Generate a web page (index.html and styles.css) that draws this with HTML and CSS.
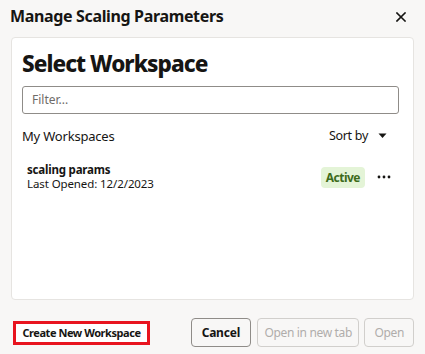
FILE: index.html
```html
<!DOCTYPE html>
<html>
<head>
<meta charset="utf-8">
<link rel="stylesheet" href="styles.css">
</head>
<body>
<div class="dialog">
  <div class="header">
    <div class="title">Manage Scaling Parameters</div>
    <div class="close">
      <svg width="10" height="10" viewBox="0 0 10 10"><path d="M1 1L9 9M9 1L1 9" stroke="#161513" stroke-width="1.6" stroke-linecap="square"/></svg>
    </div>
  </div>
  <div class="card">
    <h1 class="heading">Select Workspace</h1>
    <div class="filter">Filter...</div>
    <div class="listhead">
      <span class="mylabel">My Workspaces</span>
      <span class="sort">Sort by
        <svg width="9" height="6" viewBox="0 0 9 6"><path d="M0.5 0.5h8L4.5 5z" fill="#161513"/></svg>
      </span>
    </div>
    <div class="row">
      <div class="info">
        <div class="name">scaling params</div>
        <div class="date">Last Opened: 12/2/2023</div>
      </div>
      <span class="badge">Active</span>
      <span class="more">
        <svg width="14" height="4" viewBox="0 0 14 4"><circle cx="2" cy="2" r="1.4" fill="#161513"/><circle cx="7" cy="2" r="1.4" fill="#161513"/><circle cx="12" cy="2" r="1.4" fill="#161513"/></svg>
      </span>
    </div>
  </div>
  <div class="footer">
    <button class="btn create">Create New Workspace</button>
    <div class="right">
      <button class="btn outline cancel">Cancel</button>
      <button class="btn outline disabled newtab">Open in new tab</button>
      <button class="btn outline disabled">Open</button>
    </div>
  </div>
</div>
</body>
</html>
```
FILE: styles.css
```css
html, body {
  margin: 0;
  padding: 0;
  background: #f8f7f6;
}
body {
  font-family: "Noto Sans", "Open Sans", sans-serif;
  color: #161513;
  width: 425px;
  height: 354px;
  overflow: hidden;
}
.dialog {
  display: flex;
  flex-direction: column;
  height: 354px;
}
.header {
  display: flex;
  align-items: center;
  justify-content: space-between;
  height: 35px;
  padding: 0 19px 0 10px;
  box-sizing: border-box;
}
.title {
  font-size: 16px;
  font-weight: 700;
  letter-spacing: -0.35px;
  margin-top: -2px;
}
.close {
  display: flex;
}
.card {
  margin: 2px 11px 0 11px;
  height: 264px;
  background: #ffffff;
  border: 1px solid #e6e4e1;
  border-radius: 4px;
  box-sizing: border-box;
  padding: 0 14px 0 10px;
}
.heading {
  margin: 10px 0 0 0;
  font-size: 22.5px;
  font-weight: 800;
  letter-spacing: -0.95px;
  line-height: 32px;
}
.filter {
  margin-top: 6px;
  height: 28px;
  border: 1px solid #8f8c88;
  border-radius: 3px;
  box-sizing: border-box;
  padding-left: 9px;
  font-size: 12px;
  line-height: 26px;
  color: #6f6c69;
}
.listhead {
  display: flex;
  justify-content: space-between;
  align-items: center;
  margin-top: 13px;
  font-size: 13px;
  height: 18px;
}
.mylabel {
  letter-spacing: -0.2px;
}
.sort {
  display: flex;
  align-items: center;
  gap: 10px;
  font-size: 12.5px;
  letter-spacing: -0.3px;
  padding-right: 12px;
}
.row {
  display: flex;
  align-items: center;
  margin-top: 18px;
  padding-left: 5px;
}
.info {
  flex: 1;
}
.name {
  font-size: 11.5px;
  font-weight: 700;
  line-height: 14px;
  letter-spacing: -0.2px;
}
.date {
  font-size: 11.5px;
  line-height: 14px;
  letter-spacing: -0.1px;
}
.badge {
  background: #e4f4d7;
  color: #3d6b1a;
  font-weight: 700;
  font-size: 12px;
  border-radius: 4px;
  padding: 0 5px;
  height: 21px;
  line-height: 21px;
  margin-top: 2px;
  letter-spacing: -0.5px;
}
.more {
  display: flex;
  margin-left: 12px;
  margin-right: 8px;
}
.footer {
  display: flex;
  justify-content: space-between;
  align-items: center;
  padding: 0 11px 0 13px;
  height: 54px;
  box-sizing: border-box;
  padding-top: 11px;
}
.right {
  display: flex;
  gap: 5px;
}
.btn {
  font-family: "Noto Sans", "Open Sans", sans-serif;
  font-size: 12px;
  font-weight: 700;
  color: #161513;
  height: 29px;
  border-radius: 4px;
  box-sizing: border-box;
  cursor: pointer;
  letter-spacing: -0.2px;
}
.create {
  background: #ffffff;
  border: 3px solid #e8141f;
  border-radius: 0;
  height: 24px;
  width: 137px;
  padding: 0;
  font-size: 11px;
  letter-spacing: -0.45px;
  line-height: 18px;
}
.outline {
  background: #f8f7f6;
  border: 1px solid #8f8c88;
  padding: 0 9px;
}
.cancel {
  padding: 0 10px;
  margin-right: 1px;
}
.newtab {
  padding: 0 6.5px;
}
.disabled {
  color: #b0adab;
  border-color: #d1cfcc;
  font-weight: 400;
  letter-spacing: -0.35px;
}
```
